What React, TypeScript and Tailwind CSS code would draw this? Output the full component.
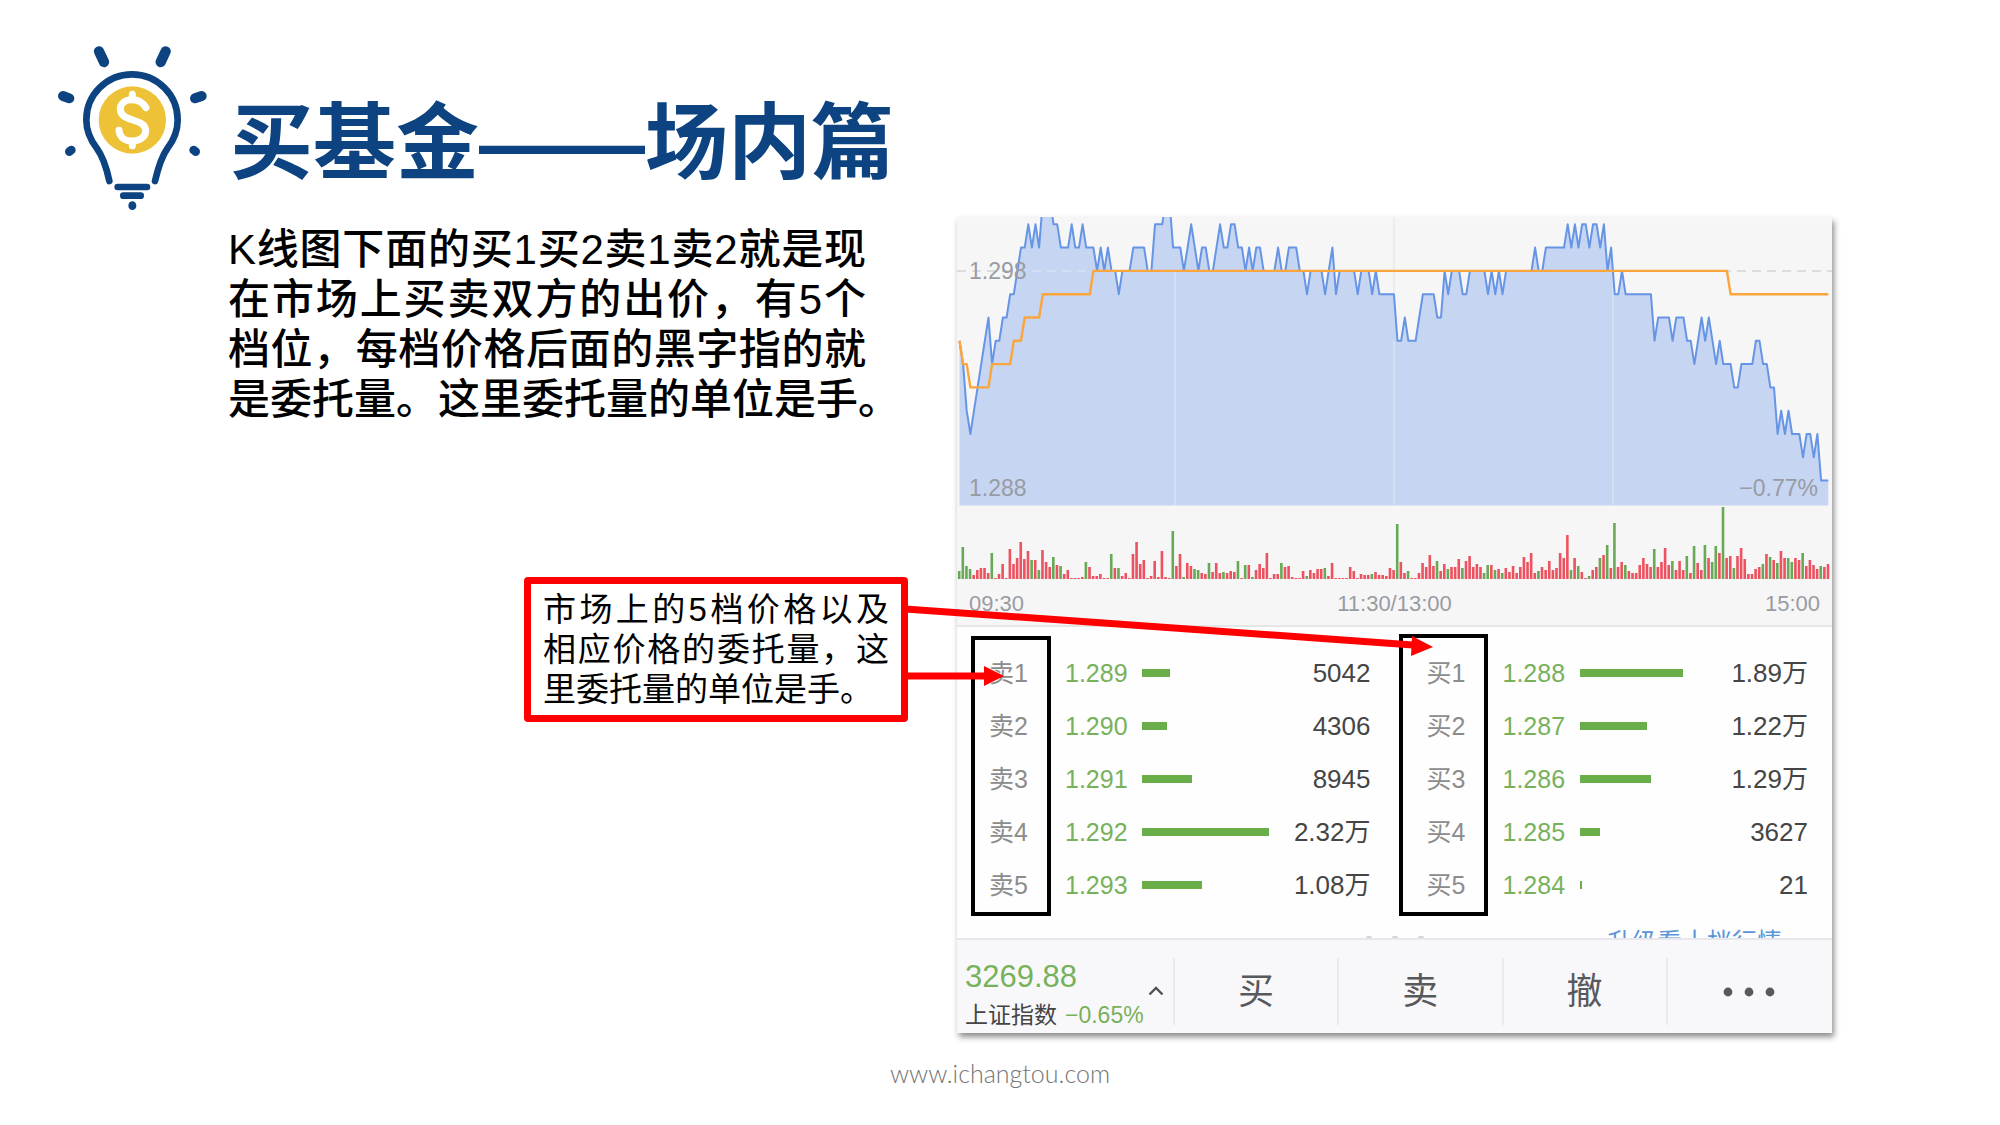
/* One character per trading minute: the number of price ticks below the chart's top, in base 36. */
const PRICE =
  "679a987657" + "6655443221" + "2120001122" + "2122122232" + "3233433322" + "2233111002" +
  "2232123223" + "3212211223" + "2322333323" + "3222334333" + "3432433333" + "4333434444" +
  "4665666544" + "4455343334" + "4333334343" + "4333333332" + "3322222212" + "1211211213" +
  "2443444444" + "4465555655" + "5667656567" + "6777887777" + "667788a9a9" + "aaabaabaccc";

/* Average price as [minute, tick] corner points. */
const AVERAGE = [
  [0, 6], [1, 7], [2, 7], [3, 8], [8, 8], [9, 7], [14, 7], [15, 6], [17, 6], [18, 5],
  [22, 5], [23, 4], [36, 4], [37, 3], [212, 3], [213, 4], [240, 4],
];

/* Traded volume per minute: rising minutes positive, falling minutes negative. */
const VOLUME = [
  -8, -32, -13, -10, 4, 9, 11, 11, 6, -26, 1, 5, 15, 1, 30, 15, 21, 37, 20, 28,
  -19, 19, -9, 29, 17, 12, -22, 14, -13, 5, 9, 1, 1, 1, 2, -17, 12, 3, 3, 5,
  1, 1, -25, 11, -11, 3, 6, 1, 25, 37, 15, 19, 1, 3, 18, 2, 28, 2, 1, -48,
  13, 25, -2, 16, 13, -10, -9, 6, 5, -16, 7, 16, 6, -7, 6, 8, 7, -18, 1, -14,
  14, -2, 9, 15, 11, 26, 1, 5, 5, -16, 12, 13, 2, 1, 1, 8, -3, 9, 6, 10,
  10, -11, 3, 16, 1, 1, 1, 1, 12, 8, 1, 5, 4, 4, -5, 7, 4, 4, 3, 11,
  9, -55, 17, 6, -8, 1, 1, 6, 16, 12, 24, 13, -18, 8, 15, -10, 12, 12, 20, -11,
  18, 23, 12, 15, 12, -6, -14, 14, -9, 10, -6, 11, 7, 13, 6, 12, 22, 17, 26, 6,
  -8, 12, 9, 18, 9, 11, 26, 21, 44, -9, 21, -13, 7, 1, -3, 9, 12, -21, 24, -34,
  11, -56, 12, 17, -14, 8, 6, 6, 14, 21, 15, 12, -30, 12, 17, 31, 14, -18, 9, 18,
  9, -23, 6, -33, 16, 9, -34, 21, -17, -33, 26, -72, 21, 23, -11, 23, 31, 20, 5, 5,
  10, 12, -15, 25, -22, 19, -16, 28, 21, -21, -17, 21, 19, -26, 13, 19, 14, 10, -13, 12, 15,
];

const STEP = 3.62;
const px = (minute: number) => 2.5 + minute * STEP;
const py = (tick: number) => -16 + tick * 23.3;

const pricePoints = PRICE.split("")
  .map((c, i) => `${px(i).toFixed(1)},${py(parseInt(c, 36)).toFixed(1)}`)
  .join(" ");
const averagePoints = AVERAGE.map(([m, t]) => `${px(m).toFixed(1)},${py(t).toFixed(1)}`).join(" ");

type Quote = { label: string; price: string; bar: number; volume: string };

const SELL: Quote[] = [
  { label: "卖1", price: "1.289", bar: 28, volume: "5042" },
  { label: "卖2", price: "1.290", bar: 25, volume: "4306" },
  { label: "卖3", price: "1.291", bar: 50, volume: "8945" },
  { label: "卖4", price: "1.292", bar: 127, volume: "2.32万" },
  { label: "卖5", price: "1.293", bar: 60, volume: "1.08万" },
];

const BUY: Quote[] = [
  { label: "买1", price: "1.288", bar: 103, volume: "1.89万" },
  { label: "买2", price: "1.287", bar: 67, volume: "1.22万" },
  { label: "买3", price: "1.286", bar: 71, volume: "1.29万" },
  { label: "买4", price: "1.285", bar: 20, volume: "3627" },
  { label: "买5", price: "1.284", bar: 2, volume: "21" },
];

function Logo() {
  return (
    <svg viewBox="0 0 510 525" className="h-[175px] w-[170px] shrink-0" fill="none" aria-hidden="true">
      <circle cx="247" cy="240" r="101" fill="#edc237" />
      <g stroke="#0c4380" strokeLinecap="round">
        <path
          d="M178 423C170 385 159 350 140 324C120 298 109 275 109 240A137 137 0 0 1 383 240C383 275 373 298 353 324C334 350 324 385 315 423"
          strokeWidth="20"
        />
        <path d="M203 441H291M220 467H272" strokeWidth="20" />
        <path d="M147 34L162 66M347 34L332 66" strokeWidth="31" />
        <path d="M39 168L58 175M455 168L435 175" strokeWidth="30" />
        <path d="M64 330L58 335M431 330L437 335" strokeWidth="26" />
      </g>
      <ellipse cx="247" cy="497" rx="12" ry="13" fill="#0c4380" />
      <path
        d="M288 203C279 188 266 179 247 179C226 179 211 190 211 207C211 227 228 233 248 240C270 247 287 253 287 272C287 291 269 303 247 303C225 303 208 291 207 271"
        stroke="#fff"
        strokeWidth="21"
        strokeLinecap="round"
      />
      <path d="M247 163V176M247 306V317" stroke="#fff" strokeWidth="21" strokeLinecap="round" />
      <path d="M233 180L247 156L261 180ZM231 302L247 324L263 302Z" fill="#fff" />
    </svg>
  );
}

function Chart() {
  return (
    <div className="relative h-[410px] border-b-2 border-[#e6e6e6] bg-[#f6f6f6] text-[23px] leading-8 text-[#999ba3]">
      <svg
        viewBox="0 0 875 408"
        preserveAspectRatio="none"
        className="block h-full w-full"
        fill="none"
        role="img"
        aria-label="分时走势图"
      >
        <path d="M0 54H875" stroke="#dcdcdc" strokeWidth="2" strokeDasharray="9 6" />
        <path d="M437 0V288" stroke="#ececec" strokeWidth="2" />
        <polygon points={`2.5,288.5 ${pricePoints} 871.3,288.5`} fill="#c5d5f2" />
        <path d="M218 54V288M437 124V288M656 54V288" stroke="#d5e0f5" strokeWidth="2" />
        <path d="M60 54H137" stroke="#d3def2" strokeWidth="2" strokeDasharray="9 6" />
        <polyline points={pricePoints} stroke="#6795e6" strokeWidth="2" strokeLinejoin="round" />
        <polyline points={averagePoints} stroke="#fba63c" strokeWidth="2.4" strokeLinejoin="round" />
        {VOLUME.map((v, i) => (
          <rect
            key={i}
            x={px(i) - 1.6}
            y={362 - Math.abs(v)}
            width="2.6"
            height={Math.abs(v)}
            fill={v > 0 ? "#ec5260" : "#67a955"}
          />
        ))}
      </svg>
      <span className="absolute left-3 top-[38px]">1.298</span>
      <span className="absolute left-3 top-[255px]">1.288</span>
      <span className="absolute right-[14px] top-[255px]">−0.77%</span>
      <div className="absolute inset-x-3 top-[371px] flex justify-between text-[22px]">
        <span>09:30</span>
        <span>11:30/13:00</span>
        <span>15:00</span>
      </div>
    </div>
  );
}

function QuoteTable({ quotes, name }: { quotes: Quote[]; name: string }) {
  return (
    <table className="w-full table-fixed text-[26px] leading-8" aria-label={name}>
      <colgroup>
        <col className="w-[108px]" />
        <col className="w-[77px]" />
        <col />
        <col className="w-[122px]" />
      </colgroup>
      <tbody>
        {quotes.map((q) => (
          <tr key={q.label} className="h-[53px]">
            <th scope="row" className="pl-8 text-left text-[25px] font-normal text-[#8c8c8c]">
              {q.label}
            </th>
            <td className="text-[25px] text-[#78b15c]">{q.price}</td>
            <td>
              <div className="h-2 bg-[#69ae48]" style={{ width: q.bar }} />
            </td>
            <td className="pr-6 text-right text-[#454545]">{q.volume}</td>
          </tr>
        ))}
      </tbody>
    </table>
  );
}

function TradeButton({ children, label }: { children: React.ReactNode; label?: string }) {
  return (
    <button
      type="button"
      aria-label={label}
      className="mb-2 mt-[18px] flex flex-1 items-center justify-center border-l-2 border-[#ebebef] text-[36px] leading-none text-[#58595c]"
    >
      {children}
    </button>
  );
}

function StockCard() {
  return (
    <section className="shadow-[2px_4px_6px_rgba(0,0,0,0.45)]">
      <Chart />
      <div className="relative grid h-[311px] grid-cols-2 content-start overflow-hidden bg-[#fefefe] pt-[19px]">
        <div className="relative">
          <QuoteTable quotes={SELL} name="卖盘" />
          <div className="absolute -bottom-[5px] left-[14px] -top-[10px] w-20 border-4 border-black" />
        </div>
        <div className="relative">
          <QuoteTable quotes={BUY} name="买盘" />
          <div className="absolute -bottom-[5px] left-1 -top-3 w-[89px] border-4 border-black" />
        </div>
        <div className="col-span-2 flex items-start justify-end pr-[50px] pt-[17px]">
          <a href="#level10" className="text-[25px] leading-7 text-[#5b95d6]">
            升级看十档行情
          </a>
        </div>
        <div className="absolute bottom-0 left-1/2 flex -translate-x-1/2 gap-5" aria-hidden="true">
          <span className="h-[2px] w-[6px] rounded-t-full bg-[#d4d4d4]" />
          <span className="h-[2px] w-[6px] rounded-t-full bg-[#d4d4d4]" />
          <span className="h-[2px] w-[6px] rounded-t-full bg-[#d4d4d4]" />
        </div>
      </div>
      <div className="flex h-[95px] border-t-2 border-[#e8e8ec] bg-[#f8f8fb] pr-[2px]">
        <button type="button" className="flex w-[216px] items-center justify-between pl-2 pr-[9px] text-left">
          <span className="pt-4">
            <span className="block text-[31px] leading-10 text-[#78b15c]">3269.88</span>
            <span className="flex gap-2 whitespace-nowrap text-[23px] leading-9 text-[#444]">
              上证指数 <span className="text-[#78b15c]">−0.65%</span>
            </span>
          </span>
          <svg viewBox="0 0 16 10" className="-ml-6 mt-2 h-[10px] w-4 shrink-0" fill="none" aria-hidden="true">
            <path d="M1.5 8.5L8 2L14.5 8.5" stroke="#505054" strokeWidth="2.4" />
          </svg>
        </button>
        <TradeButton>买</TradeButton>
        <TradeButton>卖</TradeButton>
        <TradeButton>撤</TradeButton>
        <TradeButton label="更多">
          <svg viewBox="0 0 52 10" className="h-[10px] w-[52px]" fill="#58595c" aria-hidden="true">
            <circle cx="5" cy="5" r="4.4" />
            <circle cx="26" cy="5" r="4.4" />
            <circle cx="47" cy="5" r="4.4" />
          </svg>
        </TradeButton>
      </div>
    </section>
  );
}

function Callout() {
  return (
    <aside className="relative z-10 ml-auto mt-[152px] w-[384px] rounded-sm border-[7px] border-[#ff0000] bg-white px-3 pb-[5px] pt-[6px] text-[33px] leading-10">
      <span className="block whitespace-nowrap [text-align-last:justify]">市场上的5档价格以及</span>
      <span className="block whitespace-nowrap [text-align-last:justify]">相应价格的委托量，这</span>
      <span className="block whitespace-nowrap">里委托量的单位是手。</span>
      <svg
        viewBox="0 0 530 143"
        className="pointer-events-none absolute -top-[7px] left-[374px] h-[143px] w-[530px]"
        fill="#ff0000"
        aria-hidden="true"
      >
        <path d="M0 32L508 68" stroke="#ff0000" strokeWidth="7" />
        <path d="M507 59L528 70L506 79Z" />
        <path d="M0 99H82" stroke="#ff0000" strokeWidth="7" />
        <path d="M79 89L99 99L79 109Z" />
      </svg>
    </aside>
  );
}

export default function App() {
  return (
    <div className='min-h-screen bg-white font-["Liberation_Sans","Noto_Sans_CJK_SC",sans-serif] text-black' lang="zh-CN">
      <header className="flex h-[217px] gap-[10px] pl-[50px] pt-10">
        <Logo />
        <h1 className="pt-11 text-[83px] font-bold leading-[120px] text-[#0c4380]">买基金——场内篇</h1>
      </header>
      <main className="grid grid-cols-[680px_minmax(0,1fr)] items-start gap-[49px] pl-[228px] pr-[168px]">
        <div className="pt-2">
          <p className="w-[638px] whitespace-nowrap text-[42px] font-medium leading-[50px]">
            <span className="block [text-align-last:justify]">K线图下面的买1买2卖1卖2就是现</span>
            <span className="block [text-align-last:justify]">在市场上买卖双方的出价，有5个</span>
            <span className="block [text-align-last:justify]">档位，每档价格后面的黑字指的就</span>
            <span className="block">是委托量。这里委托量的单位是手。</span>
          </p>
          <Callout />
        </div>
        <StockCard />
      </main>
      <footer className='pt-[22px] text-center font-["Lato",sans-serif] text-[25px] font-light leading-9 text-[#747474]'>
        www.ichangtou.com
      </footer>
    </div>
  );
}
